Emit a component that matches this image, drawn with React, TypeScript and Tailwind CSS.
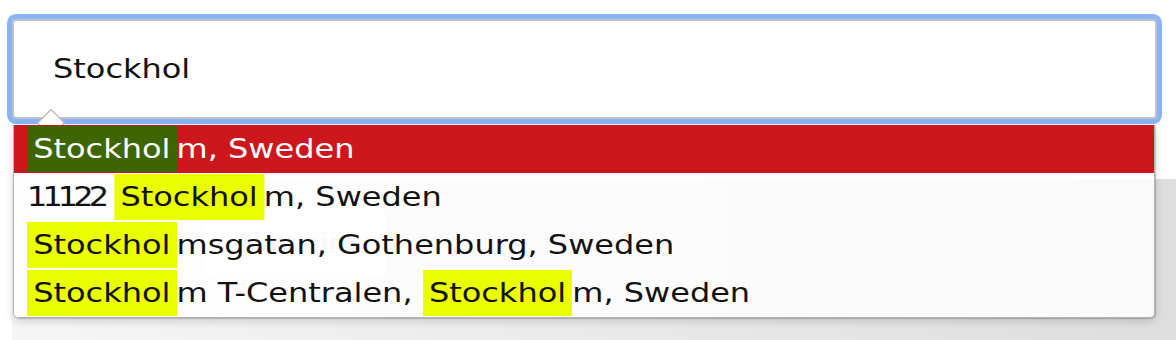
import type { ReactNode } from 'react';

/* ── Autocomplete demo: focused search input + suggestion list ──────── */

type Part = string | { mark: string } | { digits: string };

interface Suggestion {
  parts: Part[];
  active?: boolean;
}

const suggestions: Suggestion[] = [
  { parts: [{ mark: 'Stockhol' }, 'm, Sweden'], active: true },
  { parts: [{ digits: '11122' }, ' ', { mark: 'Stockhol' }, 'm, Sweden'] },
  { parts: [{ mark: 'Stockhol' }, 'msgatan, Gothenburg, Sweden'] },
  { parts: [{ mark: 'Stockhol' }, 'm T-Centralen, ', { mark: 'Stockhol' }, 'm, Sweden'] },
];

/* wide display face: DejaVu stretched horizontally */
const Wide = ({ children, className = '' }: { children: ReactNode; className?: string }) => (
  <div className={`inline-block origin-left scale-x-[1.23] whitespace-pre ${className}`}>{children}</div>
);

const Row = ({ parts, active }: Suggestion) => (
  <div
    className={[
      'relative h-[48px] pl-[13px] leading-[48px]',
      active ? 'bg-[#cc181c] text-white' : 'text-[#111]',
    ].join(' ')}
  >
    <Wide>
      {parts.map((p, i) => {
        if (typeof p === 'string') return <span key={i}>{p}</span>;
        if ('digits' in p)
          return (
            <span key={i} className="tracking-[-4px]">
              {p.digits}
            </span>
          );
        return (
          <span
            key={i}
            className={[
              'inline-block px-[5px] leading-[46px]',
              active ? 'bg-[#3d6600] text-white' : 'bg-[#eaff00] text-[#111]',
            ].join(' ')}
          >
            {p.mark}
          </span>
        );
      })}
    </Wide>
  </div>
);

export default function App() {
  return (
    <div className="relative h-[340px] w-[1176px] overflow-hidden bg-white font-['DejaVu_Sans',sans-serif] text-[26px]">
      {/* page content behind the open list */}
      <div className="absolute bottom-0 left-[12px] right-0 top-[179px] bg-linear-to-r from-[#f6f6f6] to-[#dedede] pl-[194px] pt-[29px]">
        <div className="flex h-[70px] w-[180px] items-center justify-center rounded-[8px] bg-[#fdfdfd]">
          <span className="text-[24px] font-bold text-[#d2d2d2]">Aimpoint</span>
        </div>
      </div>

      {/* input */}
      <div className="relative ml-[12px] mt-[19px] h-[100px] w-[1145px] rounded-[4px] border-2 border-[#c2c2c2] bg-white pl-[39px] leading-[97px] text-[#111] shadow-[0_0_0_5px_#8ab4f8]">
        <Wide>Stockhol</Wide>
      </div>

      {/* suggestion list */}
      <div className="absolute left-[13px] top-[125px] w-[1142px] rounded-b-[5px] border border-t-0 border-[#b3b3b3] bg-white/85 shadow-[1px_1px_1px_rgba(0,0,0,0.18),0_3px_10px_rgba(0,0,0,0.16)]">
        <div className="absolute left-[27px] top-[-12px] h-[20px] w-[20px] rotate-45 border border-[#a9a9a9] bg-white" />
        {suggestions.map((s, i) => (
          <Row key={i} {...s} />
        ))}
      </div>
    </div>
  );
}
